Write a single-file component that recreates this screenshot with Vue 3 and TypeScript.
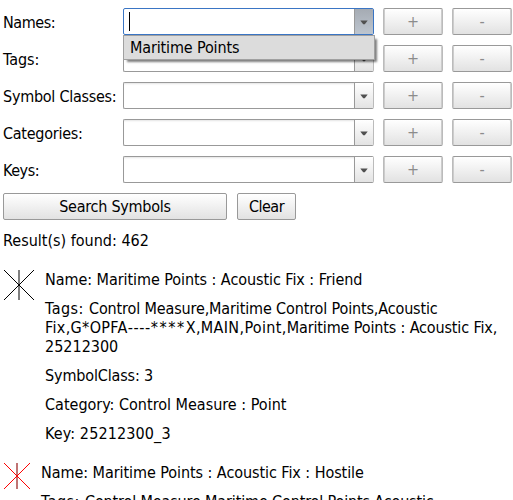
<script setup lang="ts">
interface Field {
  label: string
  tone: string
  open?: boolean
}

interface TagRun {
  text: string
  tone: string
}

interface Result {
  id: string
  name: string
  tags: TagRun[]
  symbolClass?: string
  category?: string
  entry?: string
  hostile: boolean
}

const fields: Field[] = [
  { label: 'Names:', tone: 'tight', open: true },
  { label: 'Tags:', tone: 'plain' },
  { label: 'Symbol Classes:', tone: 'close' },
  { label: 'Categories:', tone: 'close' },
  { label: 'Keys:', tone: 'tight' },
]

const results: Result[] = [
  {
    id: 'friend',
    name: 'Maritime Points : Acoustic Fix : Friend',
    tags: [
      { text: 'Control Measure,Maritime Control Points,Acoustic ', tone: 'snug' },
      { text: 'Fix,G*OPFA', tone: 'wide' },
      { text: '----', tone: 'dashes' },
      { text: '****', tone: 'stars' },
      { text: 'X,MAIN,Point,', tone: 'wide' },
      { text: 'Maritime Points : Acoustic Fix, ', tone: 'snug' },
      { text: '25212300', tone: 'plain' },
    ],
    symbolClass: '3',
    category: 'Control Measure : Point',
    entry: '25212300_3',
    hostile: false,
  },
  {
    id: 'hostile',
    name: 'Maritime Points : Acoustic Fix : Hostile',
    tags: [{ text: 'Control Measure,Maritime Control Points,Acoustic', tone: 'snug' }],
    hostile: true,
  },
]
</script>

<template>
  <main class="search">
    <form class="form" @submit.prevent>
      <div v-for="f in fields" :key="f.label" class="row">
        <label class="label" :class="f.tone">{{ f.label }}</label>
        <div class="combo" :class="{ focused: f.open }">
          <div class="value"><span v-if="f.open" class="caret"></span></div>
          <div class="drop">
            <svg width="8" height="5" viewBox="0 0 8 5"><path d="M0.3 0.5H7.7L4.8 4.3H3.2Z" /></svg>
          </div>
          <div v-if="f.open" class="popup">Maritime Points</div>
        </div>
        <button class="btn step" type="button" disabled>+</button>
        <button class="btn step" type="button" disabled>-</button>
      </div>
      <div class="actions">
        <button class="btn submit" type="submit">Search Symbols</button>
        <button class="btn clear" type="button">Clear</button>
      </div>
    </form>
    <p class="count">Result(s) found: 462</p>
    <article v-for="r in results" :key="r.id" class="result" :class="{ hostile: r.hostile }">
      <svg v-if="r.hostile" class="symbol" width="26" height="26" viewBox="0 0 26 26">
        <path class="diag" d="M0 0L26 26M26 0L0 26" />
        <path class="stem" d="M13 0V26" />
        <rect class="dot" x="12" y="12" width="2" height="2" />
      </svg>
      <svg v-else class="symbol" width="30" height="30" viewBox="0 0 30 30">
        <path class="diag" d="M0 0L30 30M30 0L0 30" />
        <path class="stem" d="M15 0V30" />
        <rect class="dot" x="14" y="14" width="2" height="2" />
      </svg>
      <div class="details">
        <p class="name">Name: {{ r.name }}</p>
        <p><span class="key">Tags: </span><span v-for="(t, i) in r.tags" :key="i" :class="t.tone">{{ t.text }}</span></p>
        <p v-if="r.symbolClass" class="snug">SymbolClass: {{ r.symbolClass }}</p>
        <p v-if="r.category">Category: {{ r.category }}</p>
        <p v-if="r.entry" class="entry">Key: {{ r.entry }}</p>
      </div>
    </article>
  </main>
</template>

<style>
body {
  overflow: hidden;
  background: #fff;
}
</style>

<style scoped>
.search {
  box-sizing: border-box;
  height: 500px;
  overflow: hidden;
  padding: 8px 0 0 3px;
  background: #fff;
  color: #000;
  font: 16px/19px "DejaVu Sans Condensed", "DejaVu Sans", sans-serif;
}
.form {
  display: flex;
  flex-direction: column;
  gap: 10px;
}
.row {
  display: grid;
  grid-template-columns: 120px 251px 60px 60px;
  height: 27px;
}
.row .step {
  margin-left: 9px;
}
.row .step + .step {
  margin-left: 18px;
}
.label {
  padding-top: 5px;
  white-space: nowrap;
}
.tight {
  letter-spacing: -0.45px;
}
.close {
  letter-spacing: -0.26px;
}
.snug {
  letter-spacing: -0.14px;
}
.wide {
  letter-spacing: 0.35px;
}
.dashes {
  letter-spacing: 0.55px;
}
.stars {
  letter-spacing: 1.55px;
}
.combo {
  position: relative;
  box-sizing: border-box;
  display: flex;
  height: 27px;
  border: 1px solid #999;
  border-right-color: #bbb;
  border-radius: 2px;
  background: #fff;
}
.focused {
  border-color: #3a75c4;
}
.value {
  flex: 1;
  padding: 3px 5px;
  box-shadow: inset 0 2px 2px -1px #e4e4e4;
}
.focused .value {
  box-shadow: none;
}
.caret {
  display: block;
  width: 1px;
  height: 19px;
  background: #000;
}
.drop {
  box-sizing: border-box;
  width: 19px;
  padding: 11px 0 0 5px;
  border-left: 1px solid #999;
  background: linear-gradient(#fff, #e3e3e3);
}
.focused .drop {
  background: linear-gradient(#a5abb3, #bdc5cf);
}
.drop svg {
  display: block;
  fill: #505050;
}
.popup {
  position: absolute;
  z-index: 1;
  top: 26px;
  left: -1px;
  box-sizing: border-box;
  width: 252px;
  height: 25px;
  padding: 2px 6px;
  border: 1px solid #a0a0a0;
  background: #dcdcdc;
  box-shadow: 3px 3px 2px -1px rgba(0, 0, 0, 0.5);
  letter-spacing: -0.14px;
}
.btn {
  box-sizing: border-box;
  height: 27px;
  padding: 0;
  border: 1px solid #999;
  border-radius: 2px;
  background: linear-gradient(#fff, #e2e2e2);
  color: #000;
  font: inherit;
}
.step {
  width: 60px;
  border-right-color: #bbb;
  border-left-color: #bbb;
  box-shadow: inset 1px 0 #ccc, inset -1px 0 #ccc;
  color: #8c8c8c;
}
.actions {
  display: flex;
  gap: 10px;
}
.submit {
  width: 224px;
  letter-spacing: -0.25px;
}
.clear {
  width: 59px;
  letter-spacing: -0.5px;
}
.count {
  margin: 11px 0 0;
}
.result {
  display: flex;
  gap: 11px;
  margin-top: 20px;
  padding-left: 1px;
}
.symbol {
  flex: none;
  fill: none;
}
.diag {
  stroke: #000;
  stroke-width: 1;
  shape-rendering: crispEdges;
}
.stem {
  stroke: #808080;
  stroke-width: 2;
}
.dot {
  fill: #000;
}
.hostile .diag {
  stroke: #f00;
}
.hostile .stem {
  stroke: #c07474;
}
.hostile .dot {
  fill: #f00;
}
.details {
  display: flex;
  flex-direction: column;
  gap: 10px;
  width: 462px;
}
.details p {
  margin: 0;
}
.name {
  letter-spacing: -0.06px;
}
.key {
  letter-spacing: 0.5px;
}
.entry {
  letter-spacing: 0.12px;
}
</style>
